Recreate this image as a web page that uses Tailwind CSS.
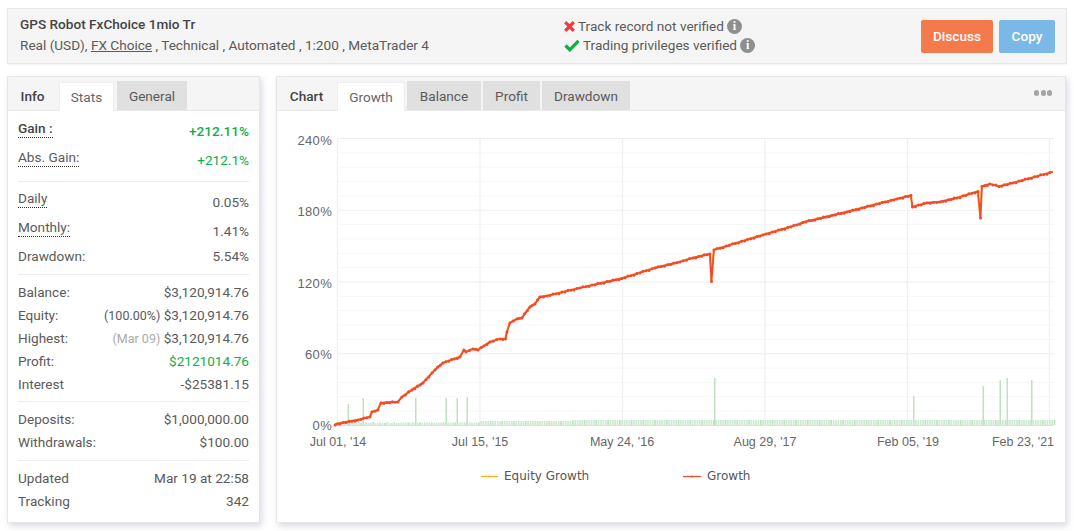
<!DOCTYPE html>
<html lang="en">
<head>
    <meta charset="UTF-8">
    <title>GPS Robot FxChoice 1mio Tr</title>
    <script src="https://cdn.jsdelivr.net/npm/@tailwindcss/browser@4"></script>
</head>
<body class="bg-white font-['Roboto',sans-serif] text-[13.6px] text-[#5a5a5a]">
<div class="w-[1074px] h-[531px] overflow-hidden pt-2 pl-[7px]">

    <!-- top bar -->
    <div class="w-[1060px] h-14 flex items-center bg-[#f5f5f5] border border-[#e8e8e8] shadow-[0_1px_2px_rgba(0,0,0,0.05)]">
        <div class="w-[556px] pl-3 -mt-[2px]">
            <div class="font-medium text-[#444] leading-5 -mt-px">GPS Robot FxChoice 1mio Tr</div>
            <div class="leading-5 mt-px">Real (USD), <span class="underline">FX Choice</span> , Technical , Automated , 1:200 , MetaTrader 4</div>
        </div>
        <div class="w-[357px] leading-[19px] -mt-px">
            <div class="flex items-center">
                <svg class="w-[11px] h-[11px] mr-[3px]" viewBox="0 0 11 11"><path d="M1.2 1.2 9.8 9.8M9.8 1.2 1.2 9.8" stroke="#f53a3a" stroke-width="3.2"/></svg>
                <span>Track record not verified</span>
                <span class="ml-[3px] w-[15px] h-[15px] rounded-full bg-[#8f8f8f] text-white text-[12px] font-bold flex items-center justify-center font-['Liberation_Serif',serif]">i</span>
            </div>
            <div class="flex items-center">
                <svg class="w-[16px] h-[13px] mr-[3px]" viewBox="0 0 16 13"><path d="M1.5 6.5 5.8 10.8 14.5 1.8" fill="none" stroke="#0fae49" stroke-width="3.2"/></svg>
                <span>Trading privileges verified</span>
                <span class="ml-[3px] w-[15px] h-[15px] rounded-full bg-[#8f8f8f] text-white text-[12px] font-bold flex items-center justify-center font-['Liberation_Serif',serif]">i</span>
            </div>
        </div>
        <div class="flex gap-[6px]">
            <div class="w-[72px] h-[33px] rounded-[2px] bg-[#f47a4c] text-white font-medium flex items-center justify-center">Discuss</div>
            <div class="w-[56px] h-[33px] rounded-[2px] bg-[#7ab8e8] text-white font-medium flex items-center justify-center">Copy</div>
        </div>
    </div>

    <div class="flex mt-3 gap-4 items-start">
        <!-- stats panel -->
        <div class="w-[253px] h-[447px] bg-white border border-[#e6e6e6] shadow-[2px_3px_6px_rgba(90,90,130,0.22)]">
            <div class="h-[34px] bg-[#f5f5f5] border-b border-[#e8e8e8] flex items-end">
                <div class="w-[51px] h-[28px] pr-[2px] flex items-center justify-center font-medium text-[#444]">Info</div>
                <div class="w-[55px] h-[29px] -mb-px bg-white border-x border-t border-[#eee] flex items-center justify-center text-[#666]">Stats</div>
                <div class="ml-[3px] w-[70px] h-[29px] pt-[2px] bg-[#e0e0e0] flex items-center justify-center">General</div>
            </div>
            <div class="px-[10px]">
                <div class="h-[71px] pt-[8px] border-b border-[#eee]">
                    <div class="h-[29px] flex justify-between">
                        <span class="font-medium text-[#444] border-b border-dotted border-[#333] h-[19px] leading-[18px]">Gain :</span>
                        <span class="font-medium text-[#0fae49] mt-[2px]">+212.11%</span>
                    </div>
                    <div class="flex justify-between">
                        <span class="border-b border-dotted border-[#333] h-[19px] leading-[18px]">Abs. Gain:</span>
                        <span class="text-[#0fae49] mt-[2px]">+212.1%</span>
                    </div>
                </div>
                <div class="h-[93px] pt-[7px] border-b border-[#eee]">
                    <div class="h-[29px] flex justify-between">
                        <span class="border-b border-dotted border-[#333] h-[19px] leading-[18px]">Daily</span>
                        <span class="mt-[3px]">0.05%</span>
                    </div>
                    <div class="h-[28px] flex justify-between">
                        <span class="border-b border-dotted border-[#333] h-[19px] leading-[18px]">Monthly:</span>
                        <span class="mt-[3px]">1.41%</span>
                    </div>
                    <div class="flex justify-between">
                        <span>Drawdown:</span>
                        <span>5.54%</span>
                    </div>
                </div>
                <div class="h-[127px] pt-[6px] border-b border-[#eee] leading-[23px]">
                    <div class="flex justify-between"><span>Balance:</span><span>$3,120,914.76</span></div>
                    <div class="flex justify-between"><span>Equity:</span><span><span class="text-[12.5px]">(100.00%)</span> $3,120,914.76</span></div>
                    <div class="flex justify-between"><span>Highest:</span><span><span class="text-[12.5px] text-[#aaa]">(Mar 09)</span> $3,120,914.76</span></div>
                    <div class="flex justify-between"><span>Profit:</span><span class="text-[#0fae49]">$2121014.76</span></div>
                    <div class="flex justify-between"><span>Interest</span><span>-$25381.15</span></div>
                </div>
                <div class="h-[59px] pt-[6px] border-b border-[#eee] leading-[23px]">
                    <div class="flex justify-between"><span>Deposits:</span><span>$1,000,000.00</span></div>
                    <div class="flex justify-between"><span>Withdrawals:</span><span>$100.00</span></div>
                </div>
                <div class="pt-[6px] leading-[23px]">
                    <div class="flex justify-between"><span>Updated</span><span>Mar 19 at 22:58</span></div>
                    <div class="flex justify-between"><span>Tracking</span><span>342</span></div>
                </div>
            </div>
        </div>

        <!-- chart panel -->
        <div class="w-[790px] h-[447px] bg-white border border-[#e6e6e6] shadow-[2px_3px_6px_rgba(90,90,130,0.22)]">
            <div class="h-[34px] bg-[#f5f5f5] border-b border-[#e8e8e8] flex items-end relative">
                <div class="w-[60px] h-[28px] pr-[1px] flex items-center justify-center font-medium text-[#444]">Chart</div>
                <div class="w-[68px] h-[29px] -mb-px bg-white border-x border-t border-[#eee] flex items-center justify-center text-[#666]">Growth</div>
                <div class="ml-[2px] w-[74px] h-[29px] pt-[2px] bg-[#e0e0e0] flex items-center justify-center">Balance</div>
                <div class="ml-[2px] w-[57px] h-[29px] pt-[2px] bg-[#e0e0e0] flex items-center justify-center">Profit</div>
                <div class="ml-[2px] w-[88px] h-[29px] pt-[2px] bg-[#e0e0e0] flex items-center justify-center">Drawdown</div>
                <div class="absolute right-[13px] top-[13px] flex gap-[1.5px]">
                    <span class="w-[5px] h-[6px] rounded-full bg-[#a5a5a5]"></span>
                    <span class="w-[5px] h-[6px] rounded-full bg-[#a5a5a5]"></span>
                    <span class="w-[5px] h-[6px] rounded-full bg-[#a5a5a5]"></span>
                </div>
            </div>
            <!-- svg uses page x - 277, page y - 111 -->
            <svg id="chart" width="788" height="411" viewBox="277 111 788 411" class="block">
                <g id="grid"></g>
                <g id="bars"></g>
                <line x1="337" y1="425.5" x2="1054" y2="425.5" stroke="#d8e0ef"/>
                <polyline id="equity" fill="none" stroke="#f7b21c" stroke-width="1.5" stroke-linejoin="round"/>
                <polyline id="growth" fill="none" stroke="#f4492c" stroke-width="1.8" stroke-linejoin="round"/>
                <g id="markers"></g>

                <g class="font-['Liberation_Sans',sans-serif] text-[13px] fill-[#666] tracking-[0.3px]" text-anchor="end">
                    <text x="332" y="145">240%</text>
                    <text x="332" y="216">180%</text>
                    <text x="332" y="288">120%</text>
                    <text x="332" y="359">60%</text>
                    <text x="332" y="430">0%</text>
                </g>
                <g class="font-['Liberation_Sans',sans-serif] text-[12.5px] fill-[#666]" text-anchor="middle">
                    <text x="338" y="446">Jul 01, '14</text>
                    <text x="480" y="446">Jul 15, '15</text>
                    <text x="622" y="446">May 24, '16</text>
                    <text x="765" y="446">Aug 29, '17</text>
                    <text x="908" y="446">Feb 05, '19</text>
                    <text x="1023" y="446">Feb 23, '21</text>
                </g>

                <line x1="481" y1="476.5" x2="498" y2="476.5" stroke="#f7b21c" stroke-width="1.2"/>
                <circle cx="489.5" cy="476.5" r="1" fill="#f7b21c"/>
                <line x1="683" y1="476.5" x2="701" y2="476.5" stroke="#f4492c" stroke-width="1.2"/>
                <circle cx="692" cy="476.5" r="1" fill="#f4492c"/>
                <g class="font-['DejaVu_Sans',sans-serif] text-[12px] fill-[#555]">
                    <text x="504" y="480">Equity Growth</text>
                    <text x="707" y="480">Growth</text>
                </g>
            </svg>
        </div>
    </div>
</div>

<script>
    const NS = 'http://www.w3.org/2000/svg';
    const add = (parent, tag, attrs) => {
        const el = document.createElementNS(NS, tag);
        for (const k in attrs) el.setAttribute(k, attrs[k]);
        document.getElementById(parent).appendChild(el);
    };

    // grid: five minor steps per major step
    for (let i = 1; i <= 20; i++) {
        const y = 425.5 - i * 14.35;
        add('grid', 'line', { x1: 337, x2: 1054, y1: y, y2: y, stroke: i % 5 === 0 ? '#eeeeee' : '#f7f7f7', 'stroke-width': i % 5 === 0 ? 1.2 : 1 });
    }
    [337.5, 480, 622.5, 765, 907.5, 1049.5].forEach(x => {
        add('grid', 'line', { x1: x, x2: x, y1: 139, y2: 425, stroke: '#f0f0f0', 'stroke-width': 1.3 });
    });

    // trade volume bars
    for (let x = 337, i = 0; x < 1054; x += 2.35, i++) {
        const top = x < 400 ? 423 + (x % 7 < 2 ? -1 : 0) : x < 480 ? 422.5 : x < 570 ? 421 : 420;
        add('bars', 'rect', { x: x, y: top, width: 1.6, height: 425 - top, fill: i % 5 === 0 ? '#b9dfbc' : '#cbe8cd' });
    }
    [[348, 404], [363, 398], [415.5, 398], [446, 398], [457, 398], [467, 397], [714.5, 378], [913.5, 396], [983, 386], [1000, 380], [1007, 378], [1031.5, 380]].forEach(([x, top]) => {
        add('bars', 'rect', { x: x - 0.5, y: top, width: 1.5, height: 425 - top, fill: '#bfe2c2' });
    });

    const pts = [[335,425],[337,424],[358,420],[370,417],[372,412],[378,410],[381,403],[398,402],[402,397],[412,390],[423,383],[435,370],[443,363],[460,357],[464,350],[466,352],[473,349],[478,350],[490,342],[500,339],[505.5,339],[507,332],[510,323],[517,319],[522,318],[530,307],[535,304],[540,297],[547,296],[580,288],[622,278.5],[655,268],[680,262],[693,258],[710,254],[711.5,281.5],[714,250],[763,235],[797,225],[803,222.5],[847,212],[897,199],[911,195.5],[912.5,207],[927,203],[940,202],[957,198],[978,191.5],[980.5,218],[982,186.5],[990,184],[999,186.5],[1013,183],[1053,172]];
    const str = pts.map(p => p.join(',')).join(' ');
    document.getElementById('growth').setAttribute('points', str);
    document.getElementById('equity').setAttribute('points', pts.map(p => (p[0] - 0.5) + ',' + (p[1] - 0.5)).join(' '));

    // round markers along the line, a little uneven like daily data
    let n = 0;
    for (let i = 1; i < pts.length; i++) {
        const [x0, y0] = pts[i - 1], [x1, y1] = pts[i];
        const steps = Math.max(1, Math.round((x1 - x0) / 3));
        for (let s = 0; s < steps; s++) {
            const t = s / steps;
            const wob = s === 0 ? 0 : ((n * 7) % 5 - 2) * 0.28;
            add('markers', 'circle', { cx: x0 + (x1 - x0) * t, cy: y0 + (y1 - y0) * t + wob, r: 1.5, fill: '#f4492c' });
            n++;
        }
    }
</script>
</body>
</html>
